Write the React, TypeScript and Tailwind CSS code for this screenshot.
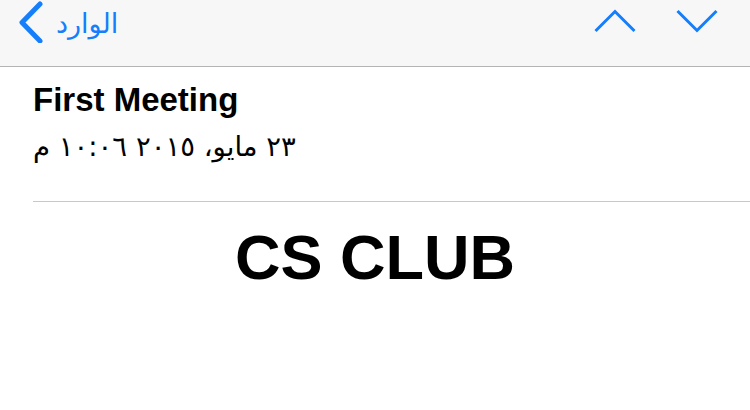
export default function App() {
  return (
    <div className="w-[750px] h-[410px] bg-white overflow-hidden font-['Liberation_Sans',Arial,sans-serif]">
      <div className="h-[67px] bg-[#f7f7f8] border-b border-[#b4b4b4] flex items-start relative">
        <div className="flex items-center h-[44px] pl-[17px] gap-[12px]">
          <svg width="27" height="42" viewBox="0 0 27 42" className="text-[#157efb]">
            <polyline points="23,3 5,21.5 23,40" fill="none" stroke="currentColor" strokeWidth="5" strokeLinecap="round" strokeLinejoin="round" />
          </svg>
          <span dir="rtl" className="text-[#157efb] text-[27px] leading-none font-['DejaVu_Sans',sans-serif] mt-[2px]">الوارد</span>
        </div>
        <div className="ml-auto flex items-center gap-[40px] pr-[32px] pt-[9px]">
          <svg width="42" height="24" viewBox="0 0 42 24" className="text-[#157efb]">
            <polyline points="1.5,22 21,2.5 40.5,22" fill="none" stroke="currentColor" strokeWidth="3" />
          </svg>
          <svg width="42" height="24" viewBox="0 0 42 24" className="text-[#157efb]">
            <polyline points="1.5,2 21,21.5 40.5,2" fill="none" stroke="currentColor" strokeWidth="3" />
          </svg>
        </div>
      </div>
      <div className="pl-[33px]">
        <div className="mt-[14px] text-[33px] leading-[38px] font-bold text-black">First Meeting</div>
        <div className="mt-[8px] flex">
          <span dir="rtl" className="text-[27.5px] leading-[38px] text-black font-['DejaVu_Sans',sans-serif]">٢٣ مايو، ٢٠١٥ ١٠:٠٦ م</span>
        </div>
        <div className="mt-[36px] border-t border-[#c8c8c8]" />
      </div>
      <div className="mt-[24px] text-center text-[63px] leading-none font-bold text-black">CS CLUB</div>
    </div>
  );
}
